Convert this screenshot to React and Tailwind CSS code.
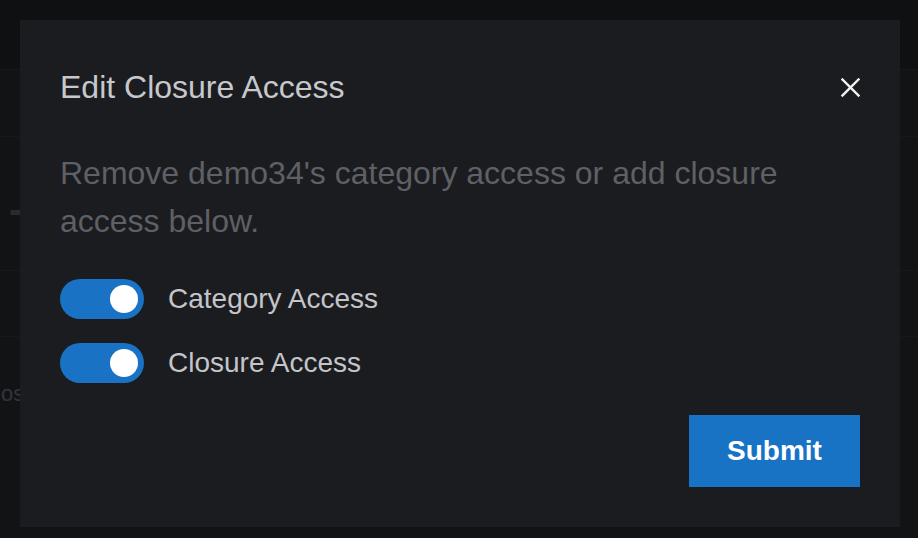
import React from 'react';

function Toggle({ on = true }) {
  return (
    <div className={`relative h-[40px] w-[84px] shrink-0 rounded-full ${on ? 'bg-[#1a72c5]' : 'bg-[#3a3b3f]'}`}>
      <div className="absolute right-[6px] top-[6px] h-[28px] w-[28px] rounded-full bg-white" />
    </div>
  );
}

export default function App() {
  return (
    <div className="relative h-[538px] w-[918px] overflow-hidden bg-[#121315] font-['Liberation_Sans',Arial,sans-serif]">
      {/* Page behind the overlay */}
      <div className="h-[70px] border-b border-[#17181a] bg-[#0f1012]" />
      <div className="h-[67px] border-b border-[#17181a]" />
      <div className="h-[134px] border-b border-[#17181a] pl-[10px] pt-[67px]">
        <span className="block text-[44px] font-bold leading-none text-[#2a2b2e]">T</span>
      </div>
      <div className="h-[66px] border-b border-[#17181a]" />
      <div className="pl-[1px] pt-[40px] text-[22px] text-[#34353a]">
        <span>os</span>
      </div>

      {/* Modal */}
      <div className="absolute left-[20px] top-[20px] flex h-[507px] w-[880px] flex-col bg-[#1b1c20] px-[40px] pb-[40px] pt-[49px]">
        <div className="flex items-start justify-between">
          <h2 className="text-[32px] leading-[36px] text-[#c7c8cb]">Edit Closure Access</h2>
          <button className="mt-[9px] flex h-[19px] w-[19px] items-center justify-center text-[#f2f2f2]">
            <svg width="19" height="19" viewBox="0 0 19 19" fill="none" stroke="currentColor" strokeWidth="2.4" strokeLinecap="square">
              <line x1="1.5" y1="1.5" x2="17.5" y2="17.5" />
              <line x1="17.5" y1="1.5" x2="1.5" y2="17.5" />
            </svg>
          </button>
        </div>

        <p className="mt-[44px] w-[770px] text-[32px] leading-[48px] text-[#5e6065]">
          Remove demo34's category access or add closure access below.
        </p>

        <div className="mt-[34px] flex flex-col gap-[24px]">
          <div className="flex items-center gap-[24px]">
            <Toggle />
            <span className="text-[28px] leading-[32px] text-[#c4c5c8]">Category Access</span>
          </div>
          <div className="flex items-center gap-[24px]">
            <Toggle />
            <span className="text-[28px] leading-[32px] text-[#c4c5c8]">Closure Access</span>
          </div>
        </div>

        <div className="mt-[32px] flex justify-end">
          <button className="h-[72px] w-[171px] bg-[#1873c5] text-[28px] font-bold text-white">
            Submit
          </button>
        </div>
      </div>
    </div>
  );
}
